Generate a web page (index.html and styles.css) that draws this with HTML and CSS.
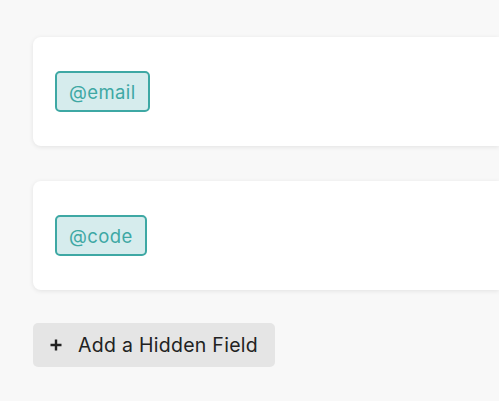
FILE: index.html
```html
<!DOCTYPE html>
<html>
<head>
<meta charset="utf-8">
<link rel="stylesheet" href="styles.css">
</head>
<body>
<div class="page">
  <div class="card"><span class="tag">@email</span></div>
  <div class="card"><span class="tag">@code</span></div>
  <button class="add-btn">
    <svg class="plus" width="12" height="12" viewBox="0 0 12 12"><path d="M6 0.5V11.5M0.5 6H11.5" stroke="#222" stroke-width="2.4" fill="none"/></svg>
    <span>Add a Hidden Field</span>
  </button>
</div>
</body>
</html>
```

FILE: styles.css
```css
html, body {
  margin: 0;
  padding: 0;
  background: #f8f8f8;
  overflow: hidden;
  font-family: Inter, "Noto Sans", sans-serif;
}
.page {
  box-sizing: border-box;
  width: 100%;
  padding: 37px 0 0 33px;
  display: flex;
  flex-direction: column;
  align-items: flex-start;
  gap: 35px;
}
.card {
  box-sizing: border-box;
  width: 100%;
  height: 109px;
  background: #fff;
  border-radius: 8px 0 0 8px;
  box-shadow: 0 1px 5px rgba(0,0,0,0.09);
  padding: 34px 22px;
  display: flex;
  align-items: flex-start;
}
.tag {
  box-sizing: border-box;
  height: 41px;
  display: inline-flex;
  align-items: center;
  padding: 0 12px;
  border: 2px solid #3ea8a4;
  border-radius: 5px;
  background: #d6eced;
  color: #3ea8a4;
  font-size: 18.5px;
  letter-spacing: 0.4px;
}
.add-btn {
  margin-top: -2px;
  box-sizing: border-box;
  height: 44px;
  width: 242px;
  border: none;
  border-radius: 5px;
  background: #e5e5e5;
  display: flex;
  align-items: center;
  padding: 0 0 0 17px;
  gap: 16px;
  font-family: Inter, "Noto Sans", sans-serif;
  font-size: 19.5px;
  letter-spacing: 0.28px;
  color: #222;
}
.plus { flex: none; }
```
